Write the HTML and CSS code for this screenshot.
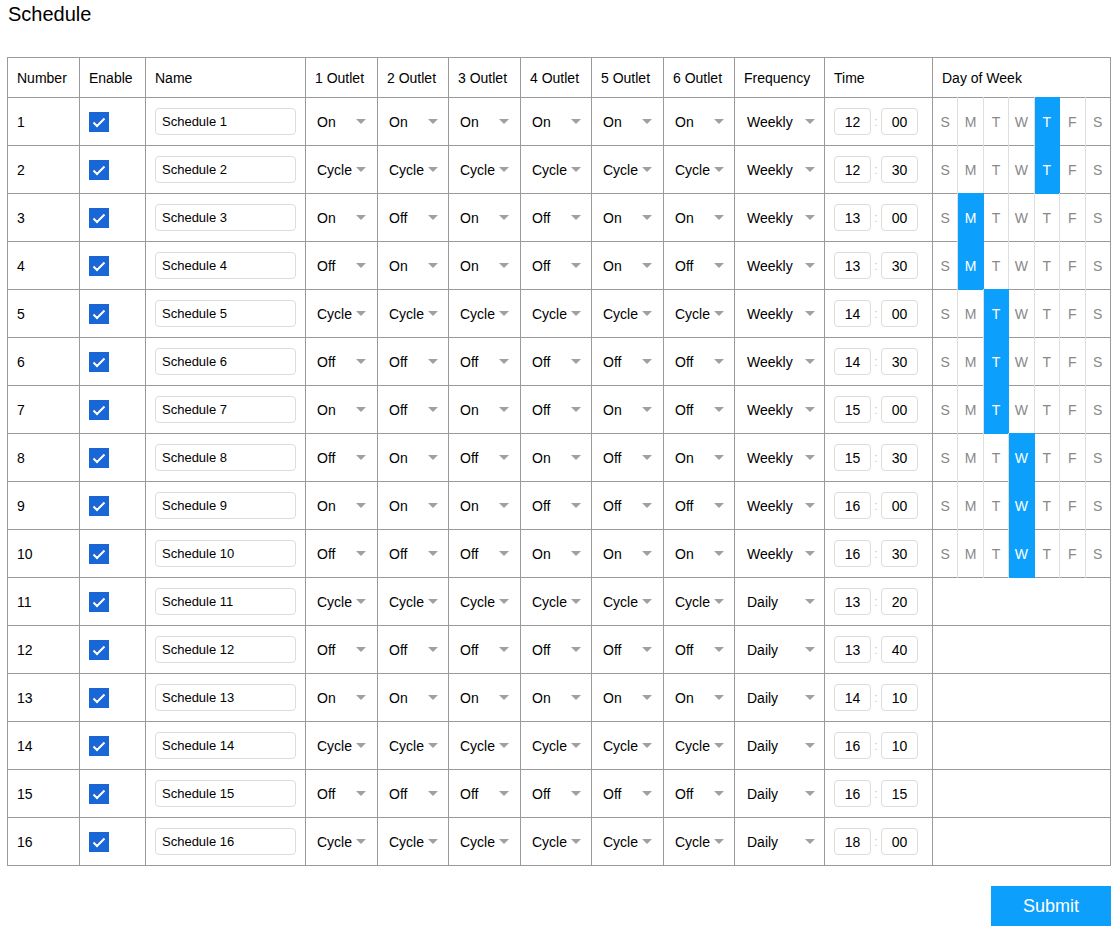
FILE: index.html
```html
<!DOCTYPE html>
<html>
<head>
<meta charset="utf-8">
<link rel="stylesheet" href="styles.css">
</head>
<body>
<div class="page">
  <div class="title">Schedule</div>
  <table class="sched">
    <colgroup>
      <col class="c-num"><col class="c-en"><col class="c-name">
      <col class="c-o1"><col class="c-o2"><col class="c-o1"><col class="c-o2"><col class="c-o1"><col class="c-o2">
      <col class="c-freq"><col class="c-time"><col class="c-day">
    </colgroup>
    <thead>
      <tr class="head">
        <th>Number</th><th>Enable</th><th>Name</th>
        <th>1 Outlet</th><th>2 Outlet</th><th>3 Outlet</th><th>4 Outlet</th><th>5 Outlet</th><th>6 Outlet</th>
        <th>Frequency</th><th>Time</th><th>Day of Week</th>
      </tr>
    </thead>
    <tbody>
      <tr>
        <td>1</td><td><span class="cb"><svg viewBox="0 0 20 20"><path d="M4.5 10.5l3.5 3.5 7.5-7.5"/></svg></span></td>
        <td><div class="inp">Schedule 1</div></td>
        <td><span class="sel"><span class="v">On</span><i></i></span></td>
        <td><span class="sel"><span class="v">On</span><i></i></span></td>
        <td><span class="sel"><span class="v">On</span><i></i></span></td>
        <td><span class="sel"><span class="v">On</span><i></i></span></td>
        <td><span class="sel"><span class="v">On</span><i></i></span></td>
        <td><span class="sel"><span class="v">On</span><i></i></span></td>
        <td><span class="sel freq"><span class="v">Weekly</span><i></i></span></td>
        <td><div class="time"><span class="tb">12</span><span class="colon">:</span><span class="tb">00</span></div></td>
        <td class="dcell"><div class="days"><span>S</span><span>M</span><span>T</span><span>W</span><span class="on">T</span><span>F</span><span>S</span></div></td>
      </tr>
      <tr>
        <td>2</td><td><span class="cb"><svg viewBox="0 0 20 20"><path d="M4.5 10.5l3.5 3.5 7.5-7.5"/></svg></span></td>
        <td><div class="inp">Schedule 2</div></td>
        <td><span class="sel"><span class="v">Cycle</span><i></i></span></td>
        <td><span class="sel"><span class="v">Cycle</span><i></i></span></td>
        <td><span class="sel"><span class="v">Cycle</span><i></i></span></td>
        <td><span class="sel"><span class="v">Cycle</span><i></i></span></td>
        <td><span class="sel"><span class="v">Cycle</span><i></i></span></td>
        <td><span class="sel"><span class="v">Cycle</span><i></i></span></td>
        <td><span class="sel freq"><span class="v">Weekly</span><i></i></span></td>
        <td><div class="time"><span class="tb">12</span><span class="colon">:</span><span class="tb">30</span></div></td>
        <td class="dcell"><div class="days"><span>S</span><span>M</span><span>T</span><span>W</span><span class="on">T</span><span>F</span><span>S</span></div></td>
      </tr>
      <tr>
        <td>3</td><td><span class="cb"><svg viewBox="0 0 20 20"><path d="M4.5 10.5l3.5 3.5 7.5-7.5"/></svg></span></td>
        <td><div class="inp">Schedule 3</div></td>
        <td><span class="sel"><span class="v">On</span><i></i></span></td>
        <td><span class="sel"><span class="v">Off</span><i></i></span></td>
        <td><span class="sel"><span class="v">On</span><i></i></span></td>
        <td><span class="sel"><span class="v">Off</span><i></i></span></td>
        <td><span class="sel"><span class="v">On</span><i></i></span></td>
        <td><span class="sel"><span class="v">On</span><i></i></span></td>
        <td><span class="sel freq"><span class="v">Weekly</span><i></i></span></td>
        <td><div class="time"><span class="tb">13</span><span class="colon">:</span><span class="tb">00</span></div></td>
        <td class="dcell"><div class="days"><span>S</span><span class="on">M</span><span>T</span><span>W</span><span>T</span><span>F</span><span>S</span></div></td>
      </tr>
      <tr>
        <td>4</td><td><span class="cb"><svg viewBox="0 0 20 20"><path d="M4.5 10.5l3.5 3.5 7.5-7.5"/></svg></span></td>
        <td><div class="inp">Schedule 4</div></td>
        <td><span class="sel"><span class="v">Off</span><i></i></span></td>
        <td><span class="sel"><span class="v">On</span><i></i></span></td>
        <td><span class="sel"><span class="v">On</span><i></i></span></td>
        <td><span class="sel"><span class="v">Off</span><i></i></span></td>
        <td><span class="sel"><span class="v">On</span><i></i></span></td>
        <td><span class="sel"><span class="v">Off</span><i></i></span></td>
        <td><span class="sel freq"><span class="v">Weekly</span><i></i></span></td>
        <td><div class="time"><span class="tb">13</span><span class="colon">:</span><span class="tb">30</span></div></td>
        <td class="dcell"><div class="days"><span>S</span><span class="on">M</span><span>T</span><span>W</span><span>T</span><span>F</span><span>S</span></div></td>
      </tr>
      <tr>
        <td>5</td><td><span class="cb"><svg viewBox="0 0 20 20"><path d="M4.5 10.5l3.5 3.5 7.5-7.5"/></svg></span></td>
        <td><div class="inp">Schedule 5</div></td>
        <td><span class="sel"><span class="v">Cycle</span><i></i></span></td>
        <td><span class="sel"><span class="v">Cycle</span><i></i></span></td>
        <td><span class="sel"><span class="v">Cycle</span><i></i></span></td>
        <td><span class="sel"><span class="v">Cycle</span><i></i></span></td>
        <td><span class="sel"><span class="v">Cycle</span><i></i></span></td>
        <td><span class="sel"><span class="v">Cycle</span><i></i></span></td>
        <td><span class="sel freq"><span class="v">Weekly</span><i></i></span></td>
        <td><div class="time"><span class="tb">14</span><span class="colon">:</span><span class="tb">00</span></div></td>
        <td class="dcell"><div class="days"><span>S</span><span>M</span><span class="on">T</span><span>W</span><span>T</span><span>F</span><span>S</span></div></td>
      </tr>
      <tr>
        <td>6</td><td><span class="cb"><svg viewBox="0 0 20 20"><path d="M4.5 10.5l3.5 3.5 7.5-7.5"/></svg></span></td>
        <td><div class="inp">Schedule 6</div></td>
        <td><span class="sel"><span class="v">Off</span><i></i></span></td>
        <td><span class="sel"><span class="v">Off</span><i></i></span></td>
        <td><span class="sel"><span class="v">Off</span><i></i></span></td>
        <td><span class="sel"><span class="v">Off</span><i></i></span></td>
        <td><span class="sel"><span class="v">Off</span><i></i></span></td>
        <td><span class="sel"><span class="v">Off</span><i></i></span></td>
        <td><span class="sel freq"><span class="v">Weekly</span><i></i></span></td>
        <td><div class="time"><span class="tb">14</span><span class="colon">:</span><span class="tb">30</span></div></td>
        <td class="dcell"><div class="days"><span>S</span><span>M</span><span class="on">T</span><span>W</span><span>T</span><span>F</span><span>S</span></div></td>
      </tr>
      <tr>
        <td>7</td><td><span class="cb"><svg viewBox="0 0 20 20"><path d="M4.5 10.5l3.5 3.5 7.5-7.5"/></svg></span></td>
        <td><div class="inp">Schedule 7</div></td>
        <td><span class="sel"><span class="v">On</span><i></i></span></td>
        <td><span class="sel"><span class="v">Off</span><i></i></span></td>
        <td><span class="sel"><span class="v">On</span><i></i></span></td>
        <td><span class="sel"><span class="v">Off</span><i></i></span></td>
        <td><span class="sel"><span class="v">On</span><i></i></span></td>
        <td><span class="sel"><span class="v">Off</span><i></i></span></td>
        <td><span class="sel freq"><span class="v">Weekly</span><i></i></span></td>
        <td><div class="time"><span class="tb">15</span><span class="colon">:</span><span class="tb">00</span></div></td>
        <td class="dcell"><div class="days"><span>S</span><span>M</span><span class="on">T</span><span>W</span><span>T</span><span>F</span><span>S</span></div></td>
      </tr>
      <tr>
        <td>8</td><td><span class="cb"><svg viewBox="0 0 20 20"><path d="M4.5 10.5l3.5 3.5 7.5-7.5"/></svg></span></td>
        <td><div class="inp">Schedule 8</div></td>
        <td><span class="sel"><span class="v">Off</span><i></i></span></td>
        <td><span class="sel"><span class="v">On</span><i></i></span></td>
        <td><span class="sel"><span class="v">Off</span><i></i></span></td>
        <td><span class="sel"><span class="v">On</span><i></i></span></td>
        <td><span class="sel"><span class="v">Off</span><i></i></span></td>
        <td><span class="sel"><span class="v">On</span><i></i></span></td>
        <td><span class="sel freq"><span class="v">Weekly</span><i></i></span></td>
        <td><div class="time"><span class="tb">15</span><span class="colon">:</span><span class="tb">30</span></div></td>
        <td class="dcell"><div class="days"><span>S</span><span>M</span><span>T</span><span class="on">W</span><span>T</span><span>F</span><span>S</span></div></td>
      </tr>
      <tr>
        <td>9</td><td><span class="cb"><svg viewBox="0 0 20 20"><path d="M4.5 10.5l3.5 3.5 7.5-7.5"/></svg></span></td>
        <td><div class="inp">Schedule 9</div></td>
        <td><span class="sel"><span class="v">On</span><i></i></span></td>
        <td><span class="sel"><span class="v">On</span><i></i></span></td>
        <td><span class="sel"><span class="v">On</span><i></i></span></td>
        <td><span class="sel"><span class="v">Off</span><i></i></span></td>
        <td><span class="sel"><span class="v">Off</span><i></i></span></td>
        <td><span class="sel"><span class="v">Off</span><i></i></span></td>
        <td><span class="sel freq"><span class="v">Weekly</span><i></i></span></td>
        <td><div class="time"><span class="tb">16</span><span class="colon">:</span><span class="tb">00</span></div></td>
        <td class="dcell"><div class="days"><span>S</span><span>M</span><span>T</span><span class="on">W</span><span>T</span><span>F</span><span>S</span></div></td>
      </tr>
      <tr>
        <td>10</td><td><span class="cb"><svg viewBox="0 0 20 20"><path d="M4.5 10.5l3.5 3.5 7.5-7.5"/></svg></span></td>
        <td><div class="inp">Schedule 10</div></td>
        <td><span class="sel"><span class="v">Off</span><i></i></span></td>
        <td><span class="sel"><span class="v">Off</span><i></i></span></td>
        <td><span class="sel"><span class="v">Off</span><i></i></span></td>
        <td><span class="sel"><span class="v">On</span><i></i></span></td>
        <td><span class="sel"><span class="v">On</span><i></i></span></td>
        <td><span class="sel"><span class="v">On</span><i></i></span></td>
        <td><span class="sel freq"><span class="v">Weekly</span><i></i></span></td>
        <td><div class="time"><span class="tb">16</span><span class="colon">:</span><span class="tb">30</span></div></td>
        <td class="dcell"><div class="days"><span>S</span><span>M</span><span>T</span><span class="on">W</span><span>T</span><span>F</span><span>S</span></div></td>
      </tr>
      <tr>
        <td>11</td><td><span class="cb"><svg viewBox="0 0 20 20"><path d="M4.5 10.5l3.5 3.5 7.5-7.5"/></svg></span></td>
        <td><div class="inp">Schedule 11</div></td>
        <td><span class="sel"><span class="v">Cycle</span><i></i></span></td>
        <td><span class="sel"><span class="v">Cycle</span><i></i></span></td>
        <td><span class="sel"><span class="v">Cycle</span><i></i></span></td>
        <td><span class="sel"><span class="v">Cycle</span><i></i></span></td>
        <td><span class="sel"><span class="v">Cycle</span><i></i></span></td>
        <td><span class="sel"><span class="v">Cycle</span><i></i></span></td>
        <td><span class="sel freq"><span class="v">Daily</span><i></i></span></td>
        <td><div class="time"><span class="tb">13</span><span class="colon">:</span><span class="tb">20</span></div></td>
        <td class="dcell"></td>
      </tr>
      <tr>
        <td>12</td><td><span class="cb"><svg viewBox="0 0 20 20"><path d="M4.5 10.5l3.5 3.5 7.5-7.5"/></svg></span></td>
        <td><div class="inp">Schedule 12</div></td>
        <td><span class="sel"><span class="v">Off</span><i></i></span></td>
        <td><span class="sel"><span class="v">Off</span><i></i></span></td>
        <td><span class="sel"><span class="v">Off</span><i></i></span></td>
        <td><span class="sel"><span class="v">Off</span><i></i></span></td>
        <td><span class="sel"><span class="v">Off</span><i></i></span></td>
        <td><span class="sel"><span class="v">Off</span><i></i></span></td>
        <td><span class="sel freq"><span class="v">Daily</span><i></i></span></td>
        <td><div class="time"><span class="tb">13</span><span class="colon">:</span><span class="tb">40</span></div></td>
        <td class="dcell"></td>
      </tr>
      <tr>
        <td>13</td><td><span class="cb"><svg viewBox="0 0 20 20"><path d="M4.5 10.5l3.5 3.5 7.5-7.5"/></svg></span></td>
        <td><div class="inp">Schedule 13</div></td>
        <td><span class="sel"><span class="v">On</span><i></i></span></td>
        <td><span class="sel"><span class="v">On</span><i></i></span></td>
        <td><span class="sel"><span class="v">On</span><i></i></span></td>
        <td><span class="sel"><span class="v">On</span><i></i></span></td>
        <td><span class="sel"><span class="v">On</span><i></i></span></td>
        <td><span class="sel"><span class="v">On</span><i></i></span></td>
        <td><span class="sel freq"><span class="v">Daily</span><i></i></span></td>
        <td><div class="time"><span class="tb">14</span><span class="colon">:</span><span class="tb">10</span></div></td>
        <td class="dcell"></td>
      </tr>
      <tr>
        <td>14</td><td><span class="cb"><svg viewBox="0 0 20 20"><path d="M4.5 10.5l3.5 3.5 7.5-7.5"/></svg></span></td>
        <td><div class="inp">Schedule 14</div></td>
        <td><span class="sel"><span class="v">Cycle</span><i></i></span></td>
        <td><span class="sel"><span class="v">Cycle</span><i></i></span></td>
        <td><span class="sel"><span class="v">Cycle</span><i></i></span></td>
        <td><span class="sel"><span class="v">Cycle</span><i></i></span></td>
        <td><span class="sel"><span class="v">Cycle</span><i></i></span></td>
        <td><span class="sel"><span class="v">Cycle</span><i></i></span></td>
        <td><span class="sel freq"><span class="v">Daily</span><i></i></span></td>
        <td><div class="time"><span class="tb">16</span><span class="colon">:</span><span class="tb">10</span></div></td>
        <td class="dcell"></td>
      </tr>
      <tr>
        <td>15</td><td><span class="cb"><svg viewBox="0 0 20 20"><path d="M4.5 10.5l3.5 3.5 7.5-7.5"/></svg></span></td>
        <td><div class="inp">Schedule 15</div></td>
        <td><span class="sel"><span class="v">Off</span><i></i></span></td>
        <td><span class="sel"><span class="v">Off</span><i></i></span></td>
        <td><span class="sel"><span class="v">Off</span><i></i></span></td>
        <td><span class="sel"><span class="v">Off</span><i></i></span></td>
        <td><span class="sel"><span class="v">Off</span><i></i></span></td>
        <td><span class="sel"><span class="v">Off</span><i></i></span></td>
        <td><span class="sel freq"><span class="v">Daily</span><i></i></span></td>
        <td><div class="time"><span class="tb">16</span><span class="colon">:</span><span class="tb">15</span></div></td>
        <td class="dcell"></td>
      </tr>
      <tr>
        <td>16</td><td><span class="cb"><svg viewBox="0 0 20 20"><path d="M4.5 10.5l3.5 3.5 7.5-7.5"/></svg></span></td>
        <td><div class="inp">Schedule 16</div></td>
        <td><span class="sel"><span class="v">Cycle</span><i></i></span></td>
        <td><span class="sel"><span class="v">Cycle</span><i></i></span></td>
        <td><span class="sel"><span class="v">Cycle</span><i></i></span></td>
        <td><span class="sel"><span class="v">Cycle</span><i></i></span></td>
        <td><span class="sel"><span class="v">Cycle</span><i></i></span></td>
        <td><span class="sel"><span class="v">Cycle</span><i></i></span></td>
        <td><span class="sel freq"><span class="v">Daily</span><i></i></span></td>
        <td><div class="time"><span class="tb">18</span><span class="colon">:</span><span class="tb">00</span></div></td>
        <td class="dcell"></td>
      </tr>
    </tbody>
  </table>
  <div class="actions"><button class="submit">Submit</button></div>
</div>
</body>
</html>
```

FILE: styles.css
```css
html, body {
  margin: 0;
  padding: 0;
  background: #fff;
}
body {
  font-family: "Liberation Sans", Arial, sans-serif;
  color: #000;
}
.page {
  padding: 2px 0 0 7px;
  width: 1104px;
}
.title {
  font-size: 20px;
  line-height: 24px;
  padding-left: 1px;
}
.sched {
  margin-top: 31px;
  width: 1104px;
  table-layout: fixed;
  border-collapse: collapse;
  font-size: 14px;
}
.c-num { width: 72px; }
.c-en { width: 66px; }
.c-name { width: 160px; }
.c-o1 { width: 72px; }
.c-o2 { width: 71px; }
.c-freq { width: 90px; }
.c-time { width: 108px; }
.c-day { width: 178px; }

.sched th, .sched td {
  border: 1px solid #9a9a9a;
  padding: 0 0 0 9px;
  text-align: left;
  vertical-align: middle;
  font-weight: normal;
  white-space: nowrap;
}
.sched tr.head { height: 40px; }
.sched tbody tr { height: 48px; }

.cb {
  display: inline-block;
  width: 20px;
  height: 20px;
  background: #1967d6;
  vertical-align: middle;
}
.cb svg {
  display: block;
  width: 20px;
  height: 20px;
}
.cb path {
  fill: none;
  stroke: #fff;
  stroke-width: 2;
}

.inp {
  width: 141px;
  height: 27px;
  box-sizing: border-box;
  border: 1px solid #dcdcdc;
  border-radius: 4px;
  font-size: 13px;
  line-height: 25px;
  padding-left: 6px;
  margin-top: 0;
}

.sel {
  display: inline-flex;
  align-items: center;
  padding-left: 2px;
}
.sel.freq { padding-left: 3px; }
.sel .v {
  display: inline-block;
  width: 39px;
}
.sel.freq .v { width: 58px; }
.sel i {
  display: inline-block;
  width: 0;
  height: 0;
  border-left: 5.5px solid transparent;
  border-right: 5.5px solid transparent;
  border-top: 5px solid #a0a0a0;
}

.time {
  display: flex;
  align-items: center;
}
.tb {
  width: 37px;
  height: 27px;
  box-sizing: border-box;
  border: 1px solid #dcdcdc;
  border-radius: 4px;
  text-align: center;
  line-height: 26px;
}
.colon {
  width: 10px;
  text-align: center;
  color: #c8c8c8;
  font-size: 12px;
}

.sched td.dcell { padding: 0; }
.days {
  display: flex;
  height: 49px;
  margin: -1px 0;
}
.days span {
  flex: 1;
  display: flex;
  align-items: center;
  justify-content: center;
  color: #888;
  border-right: 1px solid #dedede;
}
.days span:last-child { border-right: none; }
.days span.on {
  background: #0d9ffc;
  color: #fff;
  border-right-color: #0d9ffc;
}

.actions {
  display: flex;
  justify-content: flex-end;
  margin-top: 20px;
}
.submit {
  width: 120px;
  height: 40px;
  border: none;
  background: #0d9ffc;
  color: #fff;
  font-family: "Liberation Sans", Arial, sans-serif;
  font-size: 18px;
  padding: 0;
}
```
